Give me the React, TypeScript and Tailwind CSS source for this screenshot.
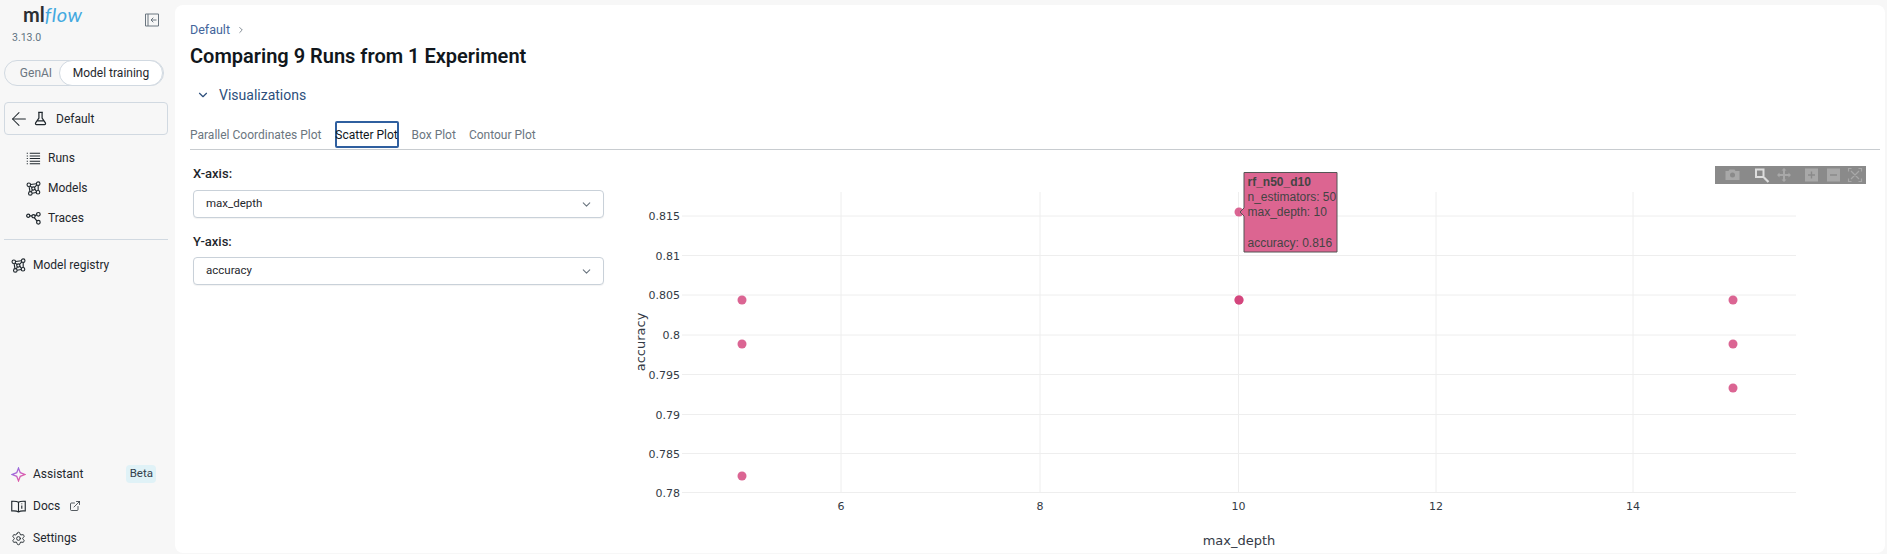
import React from 'react';
import { ArrowLeft, ChevronDown, ChevronRight, ExternalLink, Settings } from 'lucide-react';

const ui = 'font-["Roboto",sans-serif]';

const Graph = ({ className = '' }: { className?: string }) => (
  <svg viewBox="0 0 16 16" className={className} fill="none" stroke="currentColor" strokeWidth="1.2">
    <circle cx="3" cy="4" r="1.9" />
    <circle cx="13" cy="2.8" r="1.9" />
    <circle cx="7.8" cy="8" r="1.7" />
    <circle cx="4.6" cy="13.2" r="1.9" />
    <circle cx="12.8" cy="12" r="1.9" />
    <path d="M4.9 3.7L11.1 3M4.4 5.3L6.5 7M11.6 4.2L9.1 6.9M6.9 9.5L5.6 11.5M9.4 8.7L11.1 11M3.3 5.9L4.2 11.3M13 4.7V10.1M6.5 13L10.9 12.2" />
  </svg>
);

const Traces = ({ className = '' }: { className?: string }) => (
  <svg viewBox="0 0 16 16" className={className} fill="none" stroke="currentColor" strokeWidth="1.3">
    <circle cx="2.4" cy="5" r="1.7" />
    <circle cx="8" cy="5.5" r="1.7" />
    <circle cx="13.2" cy="3.5" r="1.9" />
    <circle cx="13.2" cy="12" r="1.9" />
    <path d="M4.1 5.2H6.3M9.6 4.9L11.4 4.2M8.8 7L11.8 10.7" />
  </svg>
);

const Beaker = () => (
  <svg viewBox="0 0 16 16" className="w-[15px] h-[15px]" fill="none" stroke="currentColor" strokeWidth="1.3">
    <path d="M5.5 1.5H10.5M6.3 1.5V7.5L2.8 12.7C2.3 13.6 2.9 14.5 3.8 14.5H12.2C13.1 14.5 13.7 13.6 13.2 12.7L9.7 7.5V1.5M4.5 10.5H11.5" />
  </svg>
);

const ListIcon = () => (
  <svg viewBox="0 0 16 16" className="w-[15px] h-[15px]" fill="none" stroke="currentColor" strokeWidth="1.1">
    <path d="M4 2.5H15M4 5.3H15M4 8.1H15M4 10.9H15M4 13.7H15M0.8 2.5H2M0.8 5.3H2M0.8 8.1H2M0.8 10.9H2M0.8 13.7H2" />
  </svg>
);

const CollapseIcon = () => (
  <svg viewBox="0 0 14 14" className="w-[14px] h-[14px] mt-[12px] text-[#6b7680]" fill="none" stroke="currentColor" strokeWidth="1">
    <path d="M0.5 1H13.5V13H0.5ZM3 1V13M11.5 7H6M8.3 4.7L6 7L8.3 9.3" />
  </svg>
);

const BookInfo = () => (
  <svg viewBox="0 0 16 16" className="w-[15px] h-[15px]" fill="none" stroke="currentColor" strokeWidth="1.2">
    <path d="M8 3.5C6.5 2.5 3.5 2.3 0.8 2.5V12.8C3.5 12.6 6.5 12.8 8 13.8C9.5 12.8 12.5 12.6 15.2 12.8V2.5C12.5 2.3 9.5 2.5 8 3.5ZM8 3.5V13.8M11.5 7V10.5M11.5 4.7V5.7" />
  </svg>
);

const Sparkle = () => (
  <svg viewBox="0 0 16 16" className="w-[15px] h-[15px]" fill="none" strokeWidth="1.4">
    <defs>
      <linearGradient id="spark" x1="0" y1="0" x2="1" y2="1">
        <stop offset="0" stopColor="#6a7cf0" />
        <stop offset="0.5" stopColor="#c85cc8" />
        <stop offset="1" stopColor="#f0608a" />
      </linearGradient>
    </defs>
    <path d="M8 1.2L9.9 6.1L14.8 8L9.9 9.9L8 14.8L6.1 9.9L1.2 8L6.1 6.1Z" stroke="url(#spark)" />
  </svg>
);

const NavItem = ({ icon, label, className = '' }: { icon: React.ReactNode; label: string; className?: string }) => (
  <div className={`flex items-center gap-[7px] text-[12px] text-[#1f272d] ${className}`}>
    {icon}
    <span>{label}</span>
  </div>
);

const Sidebar = () => (
  <aside className="w-[175px] shrink-0 flex flex-col h-full">
    <div className="flex justify-between pl-[23px] pr-[16px] pt-[1px] h-[30px]">
      <div className={'flex items-baseline text-[20px] leading-[26px] font-["Lato",sans-serif]'}>
        <span className="font-bold text-[#2b2f33]">ml</span>
        <span className="italic text-[#43a9e0] tracking-[0.5px]">flow</span>
      </div>
      <CollapseIcon />
    </div>
    <div className="pl-[12px] text-[10.5px] leading-[16px] text-[#5f7281]">3.13.0</div>
    <div className="ml-[4px] mt-[14px] w-[160px] h-[26px] rounded-full border border-[#d1d9e1] flex items-center bg-[#f7f7f7]">
      <span className="w-[54px] pl-[8px] text-center text-[12px] text-[#6b7680]">GenAI</span>
      <span className="flex-1 h-[26px] -my-px flex items-center justify-center rounded-full border border-[#d1d9e1] bg-white text-[12px] text-[#1f272d]">
        Model training
      </span>
    </div>
    <div className="ml-[4px] mt-[16px] w-[164px] h-[33px] rounded-[4px] border border-[#d1d9e1] flex items-center pl-[3px] gap-[3px] text-[12px] text-[#1f272d]">
      <ArrowLeft className="w-[22px] h-[22px]" strokeWidth={1.1} />
      <Beaker />
      <span className="ml-[5px]">Default</span>
    </div>
    <div className="pl-[26px] mt-[14px] flex flex-col gap-[12px]">
      <NavItem className="h-[18px]" icon={<ListIcon />} label="Runs" />
      <NavItem className="h-[18px]" icon={<Graph className="w-[15px] h-[15px]" />} label="Models" />
      <NavItem className="h-[18px]" icon={<Traces className="w-[15px] h-[15px]" />} label="Traces" />
    </div>
    <div className="mx-[4px] mt-[12px] border-t border-[#d1d9e1] w-[164px]" />
    <NavItem className="pl-[11px] mt-[16px] h-[18px]" icon={<Graph className="w-[15px] h-[15px]" />} label="Model registry" />
    <div className="flex-1" />
    <div className="pl-[11px] flex flex-col gap-[14px] pb-[7px]">
      <div className="flex items-center h-[18px]">
        <NavItem icon={<Sparkle />} label="Assistant" />
        <span className="ml-[43px] h-[18px] w-[30px] flex items-center justify-center rounded-[4px] bg-[#e0f2f7] text-[11.5px] text-[#33414c]">Beta</span>
      </div>
      <div className="flex items-center gap-[9px] h-[18px]">
        <NavItem icon={<BookInfo />} label="Docs" />
        <ExternalLink className="w-[12px] h-[12px] text-[#1f272d]" strokeWidth={1.5} />
      </div>
      <NavItem className="h-[18px]" icon={<Settings className="w-[15px] h-[15px]" strokeWidth={1.5} />} label="Settings" />
    </div>
  </aside>
);

const Select = ({ value }: { value: string }) => (
  <div className="h-[28px] rounded-[4px] border border-[#c9d1d9] bg-white flex items-center justify-between pl-[12px] pr-[10px] text-[11.5px] text-[#1f272d] shadow-[0_1px_1px_rgba(0,0,0,0.05)]">
    <span>{value}</span>
    <ChevronDown className="w-[13px] h-[13px] text-[#6b7680]" strokeWidth={2} />
  </div>
);

const xTicks = [
  { v: '6', x: 841 },
  { v: '8', x: 1040 },
  { v: '10', x: 1238.5 },
  { v: '12', x: 1436 },
  { v: '14', x: 1633 },
];
const yTicks = [
  { v: '0.815', y: 216 },
  { v: '0.81', y: 255.5 },
  { v: '0.805', y: 295 },
  { v: '0.8', y: 335 },
  { v: '0.795', y: 374.5 },
  { v: '0.79', y: 414.5 },
  { v: '0.785', y: 453.5 },
  { v: '0.78', y: 492.5 },
];
const points = [
  [742, 300], [742, 344], [742, 476],
  [1239, 212], [1239, 300], [1239, 300],
  [1733, 300], [1733, 344], [1733, 388],
];

const Chart = () => (
  <svg viewBox="620 150 1267 404" className="flex-1 h-[404px] block" style={{ fontFamily: '"DejaVu Sans", sans-serif' }}>
    {xTicks.map((t) => (
      <g key={t.v}>
        <line x1={t.x} x2={t.x} y1="192" y2="492" stroke="#eeeeee" />
        <text x={t.x} y="510" textAnchor="middle" fontSize="11" fill="#333a45">{t.v}</text>
      </g>
    ))}
    {yTicks.map((t) => (
      <g key={t.v}>
        <line x1="682" x2="1796" y1={t.y} y2={t.y} stroke="#eeeeee" />
        <text x="680" y={t.y + 4} textAnchor="end" fontSize="11" fill="#333a45">{t.v}</text>
      </g>
    ))}
    {points.map(([x, y], i) => (
      <circle key={i} cx={x} cy={y} r="4.5" fill="#d23f78" opacity="0.8" />
    ))}
    <text x="1239" y="545" textAnchor="middle" fontSize="13" fill="#333a45">max_depth</text>
    <text transform="translate(645 342) rotate(-90)" textAnchor="middle" fontSize="13" fill="#333a45">accuracy</text>

    {/* hover label */}
    <path d="M1240 212L1244 208V172.5H1337V252H1244V216Z" fill="#dc6591" stroke="#555555" />
    <g fontSize="12" fill="#444444" style={{ fontFamily: '"Liberation Sans", sans-serif' }}>
      <text x="1247.5" y="186" fontWeight="700">rf_n50_d10</text>
      <text x="1247.5" y="201">n_estimators: 50</text>
      <text x="1247.5" y="216">max_depth: 10</text>
      <text x="1247.5" y="247">accuracy: 0.816</text>
    </g>

    {/* modebar */}
    <rect x="1715" y="166" width="151" height="18" fill="#8a8a8a" />
    <g fill="#a8a8a8">
      <path d="M1725.5 171h3l1-1.5h5l1 1.5h4v9h-14z" />
      <circle cx="1732.5" cy="175" r="2.5" fill="#8a8a8a" />
      <rect x="1805" y="168.5" width="13" height="13" />
      <rect x="1827" y="168.5" width="13" height="13" />
      <path d="M1784 168l2.5 2.5h-1.5v3.5h3.5v-1.5l2.5 2.5-2.5 2.5v-1.5h-3.5v3.5h1.5l-2.5 2.5-2.5-2.5h1.5v-3.5h-3.5v1.5l-2.5-2.5 2.5-2.5v1.5h3.5v-3.5h-1.5z" />
    </g>
    <g fill="none" stroke="#dddddd">
      <rect x="1756" y="169.5" width="7.5" height="7.5" strokeWidth="2" />
      <path d="M1764 177.5l4.5 4.5" strokeWidth="2.2" />
    </g>
    <g stroke="#8a8a8a" strokeWidth="1.4">
      <path d="M1808 175h7M1811.5 171.5v7M1830 175h7" />
    </g>
    <g fill="none" stroke="#a8a8a8" strokeWidth="1.2">
      <path d="M1848.5 171.5v-3h3M1858.5 168.5h3v3M1848.5 178.5v3h3M1858.5 181.5h3v-3M1851 171l8 8M1859 171l-8 8" />
    </g>
  </svg>
);

export default function App() {
  return (
    <div className={`w-[1887px] h-[554px] overflow-hidden flex bg-[#f7f7f7] ${ui}`}>
      <Sidebar />
      <main className="flex-1 mt-[5px] mb-px mr-[2px] bg-white rounded-[8px] pl-[15px] pt-[15px] min-w-0 flex flex-col">
        <div className="flex items-center gap-[6px] text-[12.5px] leading-[20px] text-[#44659b]">
          Default
          <ChevronRight className="w-[10px] h-[10px] text-[#6b7680]" strokeWidth={2} />
        </div>
        <h1 className="mt-px text-[20px] leading-[30px] font-semibold text-[#11171c]">Comparing 9 Runs from 1 Experiment</h1>
        <div className="mt-[14px] pl-[6px] flex items-center gap-[9px] text-[14px] leading-[20px] text-[#2d4f7c]">
          <ChevronDown className="w-[14px] h-[14px]" strokeWidth={2} />
          Visualizations
        </div>
        <div className="mt-[15px] flex items-center gap-[13px] text-[12px] text-[#6b7680] border-b border-[#c8ccd0] h-[30px] mr-[5px]">
          <span>Parallel Coordinates Plot</span>
          <span className="h-[27px] w-[64px] flex items-center justify-center whitespace-nowrap border-2 border-[#2f5f9f] rounded-[2px] text-[#11171c]">Scatter Plot</span>
          <span>Box Plot</span>
          <span>Contour Plot</span>
        </div>
        <div className="flex flex-1 min-h-0 -mr-[2px]">
          <div className="w-[430px] shrink-0 pl-[3px] pr-[16px] pt-[14px]">
            <div className="text-[13px] leading-[20px] font-medium text-[#1f272d]">X-axis:</div>
            <div className="mt-[6px]"><Select value="max_depth" /></div>
            <div className="mt-[14px] text-[13px] leading-[20px] font-medium text-[#1f272d]">Y-axis:</div>
            <div className="mt-[5px]"><Select value="accuracy" /></div>
          </div>
          <Chart />
        </div>
      </main>
    </div>
  );
}
